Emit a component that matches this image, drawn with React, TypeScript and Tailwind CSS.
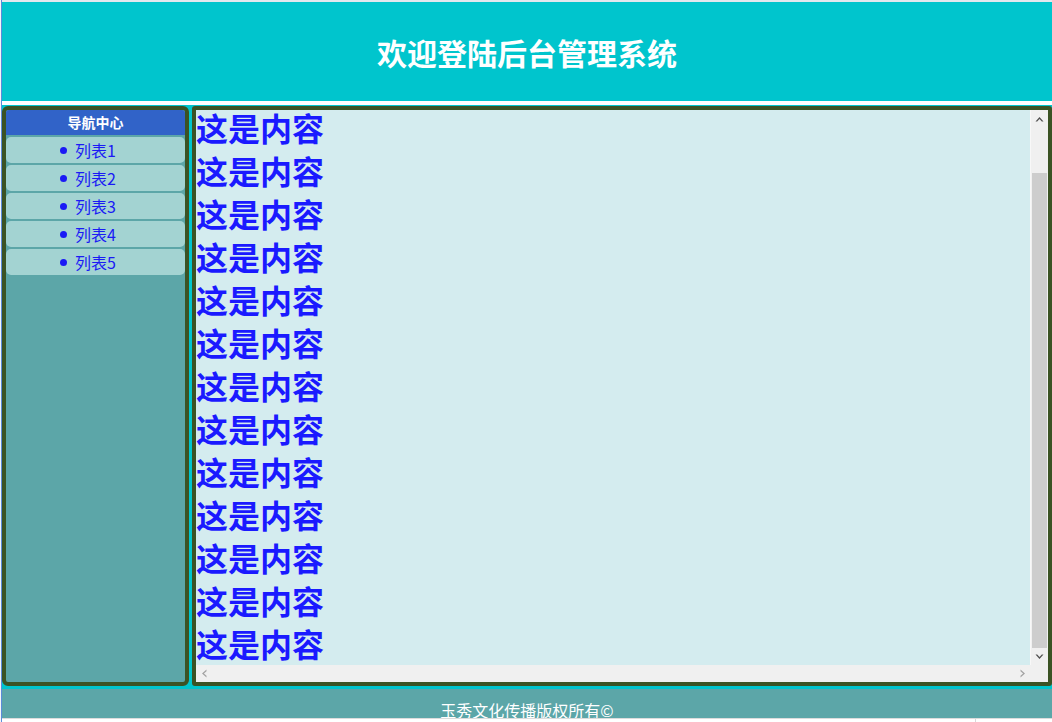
import React from "react";

const FONT = { fontFamily: '"Microsoft YaHei", "Noto Sans CJK SC", "Noto Sans", sans-serif' };

function Chevron({ dir, color }: { dir: "up" | "down" | "left" | "right"; color: string }) {
  const paths: Record<string, string> = {
    up: "M0.5 5.5 L4.5 1 L8.5 5.5 L6.8 5.5 L4.5 2.9 L2.2 5.5 Z",
    down: "M0.5 0.5 L4.5 5 L8.5 0.5 L6.8 0.5 L4.5 3.1 L2.2 0.5 Z",
    left: "M5.5 0.5 L1 4.5 L5.5 8.5 L5.5 6.8 L2.9 4.5 L5.5 2.2 Z",
    right: "M0.5 0.5 L5 4.5 L0.5 8.5 L0.5 6.8 L3.1 4.5 L0.5 2.2 Z",
  };
  const vertical = dir === "up" || dir === "down";
  return (
    <svg width={vertical ? 9 : 6} height={vertical ? 6 : 9} viewBox={vertical ? "0 0 9 6" : "0 0 6 9"}>
      <path d={paths[dir]} fill={color} />
    </svg>
  );
}

export default function App() {
  const items = ["列表1", "列表2", "列表3", "列表4", "列表5"];
  const lines = Array.from({ length: 14 }, (_, i) => i);
  return (
    <div className="w-[1052px] h-[722px] overflow-hidden flex bg-white" style={FONT}>
      <div className="w-[2px] shrink-0 flex">
        <div className="w-[1px] bg-[#f4f6f8]" />
        <div className="w-[1px] bg-[#5b8bd9]" />
      </div>
      <div className="flex-1 flex flex-col min-w-0">
        <div className="h-[2px] bg-[#e2e8ee] shrink-0" />
        <header className="h-[99px] shrink-0 bg-[#00c5cd] flex items-center justify-center pt-[1px]">
          <h1 className="text-[30px] font-bold text-white leading-none">欢迎登陆后台管理系统</h1>
        </header>
        <div className="h-[4px] shrink-0 bg-white" />
        <main className="h-[584px] shrink-0 bg-[#00c5cd] flex gap-[3px] pt-[1px] pb-[3px]">
          <aside className="w-[187px] shrink-0 border-4 border-[#3b5324] rounded-[6px] bg-[#5ca6a8] flex flex-col gap-[2px]">
            <div className="h-[25px] bg-[#3163c8] rounded-t-[3px] flex items-center justify-center text-white font-bold text-[14px]">
              导航中心
            </div>
            {items.map((t) => (
              <div key={t} className="h-[26px] bg-[#a3d3d2] rounded-[5px] flex items-center pl-[54px] gap-[8px] text-[#1a1af5] text-[16px]">
                <span className="w-[7px] h-[7px] rounded-full bg-[#1a1af5]" />
                <span className="leading-none">{t}</span>
              </div>
            ))}
          </aside>
          <section className="flex-1 min-w-0 border-4 border-[#3b5324] rounded-[3px] bg-[#f0f0f0] grid grid-cols-[1fr_17px] grid-rows-[1fr_17px]">
            <div className="bg-[#d4ecef] overflow-hidden flex flex-col justify-end border-r border-[#f8f8f8]">
              {lines.map((i) => (
                <div key={i} className="text-[32px] font-bold leading-[43px] text-[#1a1aff] shrink-0 whitespace-nowrap">
                  这是内容
                </div>
              ))}
            </div>
            <div className="bg-[#f0f0f0] flex flex-col">
              <div className="h-[17px] flex items-center justify-center">
                <Chevron dir="up" color="#505050" />
              </div>
              <div className="flex-1 flex flex-col justify-end">
                <div className="h-[475px] mx-[1px] bg-[#cdcdcd]" />
              </div>
              <div className="h-[17px] flex items-center justify-center">
                <Chevron dir="down" color="#505050" />
              </div>
            </div>
            <div className="bg-[#f0f0f0] flex items-center justify-between px-[5px]">
              <Chevron dir="left" color="#a3a3a3" />
              <Chevron dir="right" color="#a3a3a3" />
            </div>
            <div className="bg-[#f0f0f0]" />
          </section>
        </main>
        <footer className="h-[29px] shrink-0 bg-[#5ca6a8] overflow-hidden flex justify-center pt-[9px]">
          <span className="text-white text-[16px] leading-[24px]">玉秀文化传播版权所有©</span>
        </footer>
        <div className="flex-1 bg-white border-t border-[#dcdcdc] flex">
          <div className="w-[973px]" />
          <div className="w-[1px] bg-[#d8d8d8]" />
        </div>
      </div>
    </div>
  );
}
